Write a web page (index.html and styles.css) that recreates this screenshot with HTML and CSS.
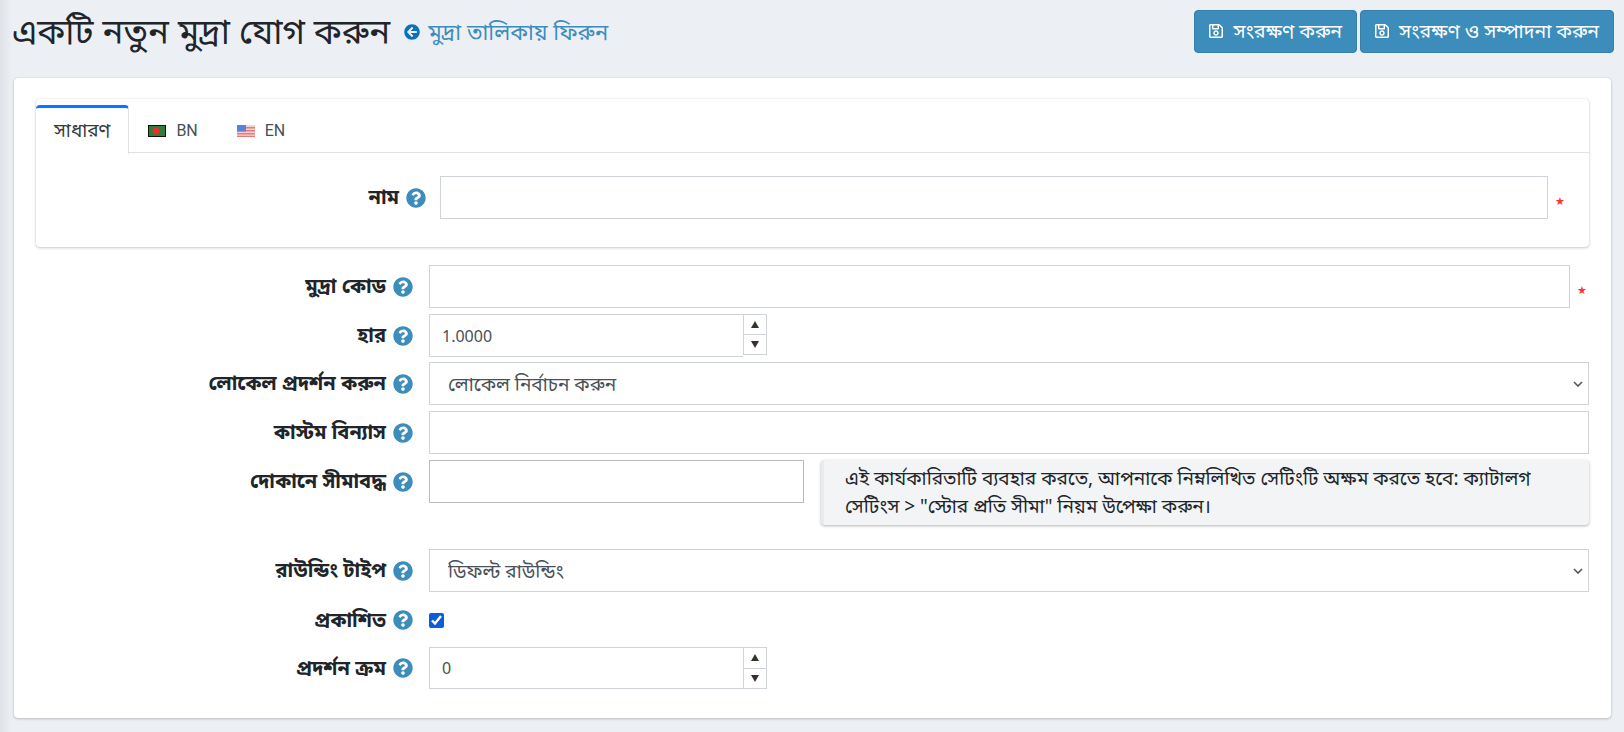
FILE: index.html
```html
<!DOCTYPE html>
<html lang="bn">
  <head>
    <meta charset="UTF-8" />
    <meta name="viewport" content="width=device-width, initial-scale=1.0" />
    <title>একটি নতুন মুদ্রা যোগ করুন</title>
    <link rel="stylesheet" href="styles.css">
  </head>
  <body>
    <svg class="icon-defs" aria-hidden="true">
      <symbol id="i-help" viewBox="0 0 512 512"><path d="M504 256c0 136.997-111.043 248-248 248S8 392.997 8 256C8 119.083 119.043 8 256 8s248 111.083 248 248zM262.655 90c-54.497 0-89.255 22.957-116.549 63.758-3.536 5.286-2.353 12.415 2.715 16.258l34.699 26.31c5.205 3.947 12.621 3.008 16.665-2.122 17.864-22.658 30.113-35.797 57.303-35.797 20.429 0 45.698 13.148 45.698 32.958 0 14.976-12.363 22.667-32.534 33.976C247.128 238.528 216 254.941 216 296v4c0 6.627 5.373 12 12 12h56c6.627 0 12-5.373 12-12v-1.333c0-28.462 83.186-29.647 83.186-106.667 0-58.002-60.165-102-116.531-102zM256 338c-25.365 0-46 20.635-46 46 0 25.364 20.635 46 46 46s46-20.636 46-46c0-25.365-20.635-46-46-46z"/></symbol>
      <symbol id="i-save" viewBox="0 0 448 512"><path d="M433.941 129.941l-83.882-83.882A48 48 0 0 0 316.118 32H48C21.49 32 0 53.49 0 80v352c0 26.51 21.49 48 48 48h352c26.51 0 48-21.49 48-48V163.882a48 48 0 0 0-14.059-33.941zM272 80v80H144V80h128zm122 352H54a6 6 0 0 1-6-6V86a6 6 0 0 1 6-6h42v104c0 13.255 10.745 24 24 24h176c13.255 0 24-10.745 24-24V83.882l78.243 78.243a6 6 0 0 1 1.757 4.243V426a6 6 0 0 1-6 6zM224 232c-48.523 0-88 39.477-88 88s39.477 88 88 88 88-39.477 88-88-39.477-88-88-88zm0 128c-22.056 0-40-17.944-40-40s17.944-40 40-40 40 17.944 40 40-17.944 40-40 40z"/></symbol>
    </svg>

    <div class="page">
      <!-- header -->
      <div class="content-header">
        <h1 class="page-title">একটি নতুন মুদ্রা যোগ করুন</h1>
        <a class="back-link" href="#">
          <svg class="back-icon" viewBox="0 0 512 512"><path d="M256 504C119 504 8 393 8 256S119 8 256 8s248 111 248 248-111 248-248 248zm28.9-143.6L209.4 288H392c13.3 0 24-10.7 24-24v-16c0-13.3-10.7-24-24-24H209.4l75.5-72.4c9.7-9.3 9.9-24.8.4-34.3l-11-10.9c-9.4-9.4-24.6-9.4-33.9 0L107.7 239c-9.4 9.4-9.4 24.6 0 33.9l132.7 132.7c9.4 9.4 24.6 9.4 33.9 0l11-11c9.6-9.5 9.4-25-.4-34.3z"/></svg>
          মুদ্রা তালিকায় ফিরুন
        </a>
        <div class="header-buttons">
          <button class="btn-save"><svg class="save-icon"><use href="#i-save"/></svg>সংরক্ষণ করুন</button>
          <button class="btn-save"><svg class="save-icon"><use href="#i-save"/></svg>সংরক্ষণ ও সম্পাদনা করুন</button>
        </div>
      </div>

      <div class="main-card">
        <!-- localized tabs -->
        <div class="tab-card">
          <div class="tab-bar">
            <div class="tab tab-active">সাধারণ</div>
            <div class="tab tab-lang">
              <svg class="flag" viewBox="0 0 18 12"><rect width="18" height="12" fill="#111"/><rect x="1" y="1" width="16" height="10" fill="#2f7d3b"/><circle cx="8" cy="6" r="3.4" fill="#ee2b2b"/></svg>
              BN
            </div>
            <div class="tab tab-lang">
              <svg class="flag" viewBox="0 0 18 12"><rect width="18" height="12" fill="#f3d3d3"/><rect y="2" width="18" height="1.5" fill="#e57a78"/><rect y="5" width="18" height="1.5" fill="#e57a78"/><rect y="8" width="18" height="1.5" fill="#e57a78"/><rect y="10.8" width="18" height="1.2" fill="#e57a78"/><rect width="9" height="6.5" fill="#5b82d8"/></svg>
              EN
            </div>
          </div>
          <div class="tab-pane">
            <div class="form-row tab-row">
              <div class="label-col label-col-tab"><label>নাম</label><svg class="help"><use href="#i-help"/></svg></div>
              <input class="text-input" type="text" />
              <span class="required">★</span>
            </div>
          </div>
        </div>

        <!-- common fields -->
        <div class="form-row">
          <div class="label-col"><label>মুদ্রা কোড</label><svg class="help"><use href="#i-help"/></svg></div>
          <input class="text-input" type="text" />
          <span class="required">★</span>
        </div>
        <div class="form-row form-row-rate">
          <div class="label-col"><label>হার</label><svg class="help"><use href="#i-help"/></svg></div>
          <div class="number-input">
            <input type="text" value="1.0000" />
            <div class="spin"><span class="spin-btn spin-up"></span><span class="spin-btn spin-down"></span></div>
          </div>
        </div>
        <div class="form-row">
          <div class="label-col"><label>লোকেল প্রদর্শন করুন</label><svg class="help"><use href="#i-help"/></svg></div>
          <select class="select-input"><option>লোকেল নির্বাচন করুন</option></select>
        </div>
        <div class="form-row">
          <div class="label-col"><label>কাস্টম বিন্যাস</label><svg class="help"><use href="#i-help"/></svg></div>
          <input class="text-input" type="text" />
        </div>
        <div class="form-row form-row-store">
          <div class="label-col"><label>দোকানে সীমাবদ্ধ</label><svg class="help"><use href="#i-help"/></svg></div>
          <input class="text-input store-input" type="text" />
          <div class="callout">এই কার্যকারিতাটি ব্যবহার করতে, আপনাকে নিম্নলিখিত সেটিংটি অক্ষম করতে হবে: ক্যাটালগ সেটিংস &gt; "স্টোর প্রতি সীমা" নিয়ম উপেক্ষা করুন।</div>
        </div>
        <div class="form-row">
          <div class="label-col"><label>রাউন্ডিং টাইপ</label><svg class="help"><use href="#i-help"/></svg></div>
          <select class="select-input"><option>ডিফল্ট রাউন্ডিং</option></select>
        </div>
        <div class="form-row form-row-check">
          <div class="label-col"><label>প্রকাশিত</label><svg class="help"><use href="#i-help"/></svg></div>
          <input class="check" type="checkbox" checked />
        </div>
        <div class="form-row">
          <div class="label-col"><label>প্রদর্শন ক্রম</label><svg class="help"><use href="#i-help"/></svg></div>
          <div class="number-input number-input-order">
            <input type="text" value="0" />
            <div class="spin"><span class="spin-btn spin-up"></span><span class="spin-btn spin-down"></span></div>
          </div>
        </div>
      </div>
    </div>
  </body>
</html>
```

FILE: styles.css
```css
* {
  box-sizing: border-box;
}
body {
  margin: 0;
  height: 732px;
  overflow: hidden;
  background-color: #ecf0f5;
  font-family: "Noto Sans", "Noto Sans Bengali", "Liberation Sans", sans-serif;
  font-size: 19px;
  color: #212529;
}
.icon-defs {
  display: none;
}
.page {
  height: 100%;
  padding: 0 13px 0 14px;
  background: linear-gradient(to right, #dfe2e7, #ecf0f5 12px);
}
.content-header {
  display: flex;
  align-items: center;
  height: 78px;
  margin-right: -3px;
  padding-bottom: 16px;
}
.page-title {
  margin: 0;
  margin-left: -2px;
  font-size: 34.7px;
  font-weight: 400;
  line-height: 1.2;
}
.back-link {
  display: flex;
  align-items: center;
  margin-left: 14px;
  padding-top: 2px;
  color: #3c8dbc;
  font-size: 22px;
  text-decoration: none;
}
.back-icon {
  width: 16px;
  height: 16px;
  margin-right: 8px;
  fill: #0a73b7;
}
.header-buttons {
  display: flex;
  gap: 3px;
  margin-left: auto;
}
.btn-save {
  display: flex;
  align-items: center;
  height: 43px;
  padding: 0 14px;
  border: 1px solid #367fa9;
  border-radius: 4px;
  background-color: #3c8dbc;
  color: #fff;
  font: inherit;
  font-size: 19.4px;
}
.save-icon {
  width: 14px;
  height: 16px;
  margin-right: 10px;
  fill: #fff;
}
.main-card {
  height: 640px;
  padding: 21px 22px 0 22px;
  border-radius: 4px;
  background-color: #fff;
  box-shadow: 0 0 1px rgba(0, 0, 0, 0.2), 0 1px 3px rgba(0, 0, 0, 0.2);
}
.tab-card {
  height: 148px;
  margin-bottom: 18px;
  border-radius: 4px;
  background-color: #fff;
  box-shadow: 0 0 1px rgba(0, 0, 0, 0.2), 0 1px 3px rgba(0, 0, 0, 0.2);
}
.tab-bar {
  display: flex;
  height: 54px;
  padding-top: 6px;
  border-bottom: 1px solid #dee2e6;
}
.tab {
  display: flex;
  align-items: center;
  height: 48px;
  padding: 0 18px;
  color: #495057;
}
.tab-active {
  height: 49px;
  border-top: 3px solid #007bff;
  border-right: 1px solid #dee2e6;
  border-radius: 4px 4px 0 0;
  background-color: #fff;
  color: #343a40;
}
.tab-lang {
  padding: 3px 20px 0 19px;
  font-family: Roboto, sans-serif;
  font-size: 16px;
}
.flag {
  width: 18px;
  height: 12px;
  margin-right: 10px;
}
.tab-pane {
  padding: 23px 22px 0 0;
}
.form-row {
  display: flex;
  align-items: center;
  margin-bottom: 6px;
}
.tab-row {
  margin-bottom: 0;
}
.form-row-rate {
  margin-bottom: 5px;
}
.label-col {
  display: flex;
  flex: none;
  justify-content: flex-end;
  align-items: center;
  width: 377px;
  margin-right: 16px;
  font-size: 20px;
}
.label-col-tab {
  width: 390px;
  margin-right: 14px;
}
.label-col label {
  font-weight: 700;
}
.help {
  flex: none;
  width: 20px;
  height: 20px;
  margin-left: 7px;
  fill: #3c8dbc;
}
.text-input,
.select-input {
  flex: 1;
  min-width: 0;
  height: 43px;
  padding: 6px 12px;
  border: 1px solid #ced4da;
  border-radius: 0;
  background-color: #fff;
  color: #495057;
  font: inherit;
}
.select-input {
  padding-left: 18px;
  appearance: none;
  background-image: url("data:image/svg+xml,%3Csvg xmlns='http://www.w3.org/2000/svg' viewBox='0 0 10 6'%3E%3Cpath d='M1 1l4 4 4-4' fill='none' stroke='%23555' stroke-width='1.6'/%3E%3C/svg%3E");
  background-repeat: no-repeat;
  background-position: right 5px center;
  background-size: 10px 6px;
}
.required {
  flex: none;
  width: 12px;
  margin-left: 7px;
  padding-top: 8px;
  color: #f33;
  font-family: "DejaVu Sans", sans-serif;
  font-size: 11px;
}
.number-input {
  display: flex;
  width: 338px;
  height: 43px;
}
.number-input input {
  flex: 1;
  min-width: 0;
  padding: 0 12px;
  border: 1px solid #ced4da;
  border-right: 0;
  color: #495057;
  font: inherit;
  font-size: 16px;
}
.number-input-order {
  height: 42px;
}
.number-input-order .spin {
  height: 42px;
}
.spin {
  display: flex;
  flex-direction: column;
  width: 24px;
  height: 41px;
  border: 1px solid #ced4da;
}
.spin-btn {
  display: flex;
  flex: 1;
  justify-content: center;
  align-items: center;
}
.spin-btn + .spin-btn {
  border-top: 1px solid #ced4da;
}
.spin-up::before,
.spin-down::before {
  content: "";
  border-left: 4.5px solid transparent;
  border-right: 4.5px solid transparent;
}
.spin-up::before {
  border-bottom: 7px solid #333;
}
.spin-down::before {
  border-top: 7px solid #333;
}
.form-row-store {
  align-items: flex-start;
  margin-bottom: 24px;
}
.form-row-store .label-col {
  height: 43px;
}
.store-input {
  flex: none;
  width: 375px;
  border-color: #bbb;
}
.callout {
  flex: 1;
  height: 65px;
  margin-left: 17px;
  padding: 4px 20px 0 21px;
  border-left: 3px solid #e9ecef;
  border-radius: 4px;
  background-color: #f2f4f6;
  box-shadow: 0 1px 3px rgba(0, 0, 0, 0.3);
  line-height: 28px;
}
.form-row-check {
  height: 30px;
  margin: 13px 0 12px;
}
.check {
  width: 15px;
  height: 15px;
  margin: 0;
  accent-color: #0b5ed7;
}
```
